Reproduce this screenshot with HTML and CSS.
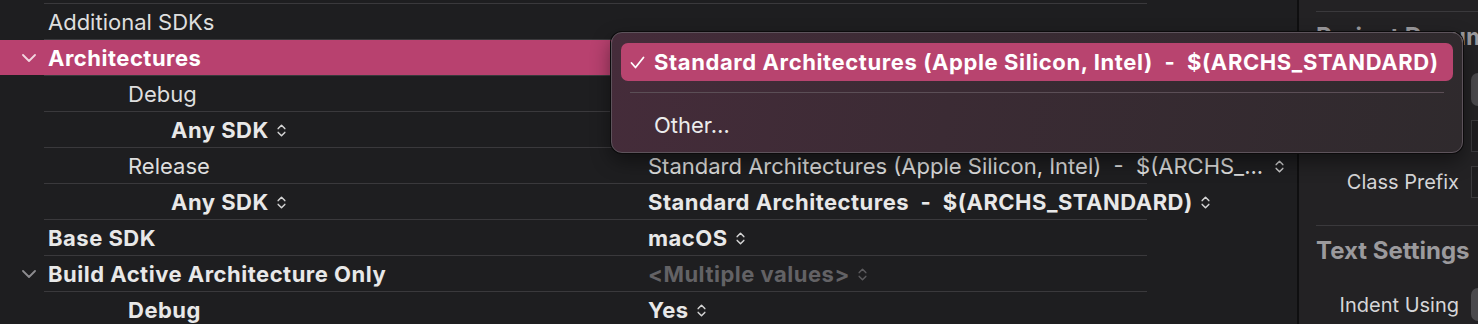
FILE: index.html
```html
<!DOCTYPE html>
<html>
<head>
<meta charset="utf-8">
<link rel="stylesheet" href="styles.css">
</head>
<body>
<div class="app">
  <div class="main">
    <div class="row"><div class="name l0">Additional SDKs</div><div class="value"></div></div>
    <div class="row selected"><div class="name l0 bold"><svg class="chev" width="14" height="8" viewBox="0 0 14 8"><path d="M1 1 L7 7 L13 1"/></svg>Architectures</div><div class="value"></div></div>
    <div class="row"><div class="name l1">Debug</div><div class="value"></div></div>
    <div class="row"><div class="name l2 bold">Any SDK<svg class="step" width="9" height="15" viewBox="0 0 9 15"><path d="M1.2 5.6 L4.5 2.2 L7.8 5.6 M1.2 9.4 L4.5 12.8 L7.8 9.4"/></svg></div><div class="value"></div></div>
    <div class="row"><div class="name l1">Release</div><div class="value">Standard Architectures (Apple Silicon, Intel)&nbsp; -&nbsp; $(ARCHS_...<svg class="step far" width="9" height="15" viewBox="0 0 9 15"><path d="M1.2 5.6 L4.5 2.2 L7.8 5.6 M1.2 9.4 L4.5 12.8 L7.8 9.4"/></svg></div></div>
    <div class="row"><div class="name l2 bold">Any SDK<svg class="step" width="9" height="15" viewBox="0 0 9 15"><path d="M1.2 5.6 L4.5 2.2 L7.8 5.6 M1.2 9.4 L4.5 12.8 L7.8 9.4"/></svg></div><div class="value bold">Standard Architectures&nbsp; -&nbsp; $(ARCHS_STANDARD)<svg class="step" width="9" height="15" viewBox="0 0 9 15"><path d="M1.2 5.6 L4.5 2.2 L7.8 5.6 M1.2 9.4 L4.5 12.8 L7.8 9.4"/></svg></div></div>
    <div class="row"><div class="name l0 bold">Base SDK</div><div class="value bold">macOS<svg class="step" width="9" height="15" viewBox="0 0 9 15"><path d="M1.2 5.6 L4.5 2.2 L7.8 5.6 M1.2 9.4 L4.5 12.8 L7.8 9.4"/></svg></div></div>
    <div class="row"><div class="name l0 bold"><svg class="chev dim" width="14" height="8" viewBox="0 0 14 8"><path d="M1 1 L7 7 L13 1"/></svg>Build Active Architecture Only</div><div class="value bold muted">&lt;Multiple values&gt;<svg class="step" width="9" height="15" viewBox="0 0 9 15"><path d="M1.2 5.6 L4.5 2.2 L7.8 5.6 M1.2 9.4 L4.5 12.8 L7.8 9.4"/></svg></div></div>
    <div class="row"><div class="name l1 bold">Debug</div><div class="value bold">Yes<svg class="step" width="9" height="15" viewBox="0 0 9 15"><path d="M1.2 5.6 L4.5 2.2 L7.8 5.6 M1.2 9.4 L4.5 12.8 L7.8 9.4"/></svg></div></div>
  </div>
  <div class="divider"></div>
  <div class="inspector">
    <div class="section">
      <div class="heading">Project Document</div>
      <div class="form">
        <div class="label">Project Format</div><div class="popup"></div>
        <div class="label">Organization</div><div class="field"></div>
        <div class="label">Class Prefix</div><div class="field"></div>
      </div>
    </div>
    <div class="section second">
      <div class="heading">Text Settings</div>
      <div class="form">
        <div class="label">Indent Using</div><div class="popup"></div>
      </div>
    </div>
  </div>
</div>
<div class="menu">
  <div class="item active"><svg class="check" width="15" height="13" viewBox="0 0 15 13"><path d="M1.5 7 L5.5 11.5 L13.5 1.5"/></svg>Standard Architectures (Apple Silicon, Intel)&nbsp; -&nbsp; $(ARCHS_STANDARD)</div>
  <div class="sep"></div>
  <div class="item">Other…</div>
</div>
</body>
</html>
```

FILE: styles.css
```css
html, body {
  margin: 0;
  padding: 0;
}
body {
  width: 1478px;
  height: 324px;
  overflow: hidden;
  background: #1e1e20;
  font-family: Inter, "Liberation Sans", sans-serif;
  font-size: 22px;
  color: #dedede;
  position: relative;
}
.app {
  display: flex;
  height: 324px;
}
.main {
  width: 1297px;
  padding-top: 3px;
  flex: none;
}
.row {
  height: 36px;
  box-sizing: border-box;
  padding-top: 2px;
  display: flex;
  align-items: center;
  background: linear-gradient(#3a393c, #3a393c) no-repeat 44px 0 / 1103px 1px;
  white-space: nowrap;
}
.row.selected {
  background: linear-gradient(#3a393c, #3a393c) no-repeat 44px 0 / 1103px 1px,
              linear-gradient(#b8416f, #b8416f) no-repeat 0 1px / 100% 35px;
  color: #ffffff;
}
.name {
  width: 648px;
  flex: none;
  display: flex;
  align-items: center;
  box-sizing: border-box;
}
.l0 { padding-left: 48px; }
.l1 { padding-left: 128px; }
.l2 { padding-left: 171px; }
.bold { font-weight: 700; letter-spacing: 0.5px; color: #e8e8e8; }
.selected .bold { color: #ffffff; }
.value {
  display: flex;
  align-items: center;
}
.muted { color: #636265; }
.chev {
  margin-left: -26px;
  margin-right: 12px;
  fill: none;
  stroke: #f2d6e0;
  stroke-width: 1.8;
  stroke-linecap: round;
  stroke-linejoin: round;
}
.chev.dim { stroke: #8d8c90; }
.step {
  margin-left: 8px;
  fill: none;
  stroke: currentColor;
  stroke-width: 1.5;
  stroke-linecap: round;
  stroke-linejoin: round;
  opacity: 0.9;
}
.step.far { margin-left: 12px; }
.divider {
  width: 2px;
  background: #0f0f10;
  flex: none;
}
.inspector {
  flex: 1;
  background: #232224;
  padding-left: 17px;
  padding-top: 11px;
  overflow: hidden;
}
.section {
  border-top: 1px solid #3a393c;
  padding-top: 12px;
  padding-bottom: 27px;
}
.heading {
  font-weight: 700;
  font-size: 24px;
  color: #9b9a9d;
  white-space: nowrap;
  height: 26px;
  line-height: 26px;
}
.form {
  display: grid;
  grid-template-columns: 143px 40px;
  column-gap: 12px;
  row-gap: 14px;
  margin-top: 23px;
  align-items: center;
}
.second .form { margin-top: 24px; }
.label {
  text-align: right;
  white-space: nowrap;
  color: #d6d6d8;
  font-size: 20px;
}
.popup {
  height: 33px;
  border-radius: 7px;
  background: #4a494c;
}
.field {
  height: 32px;
  box-sizing: border-box;
  border: 1px solid #3b3a3d;
  background: #1f1e20;
}
.menu {
  position: absolute;
  left: 611px;
  top: 32px;
  width: 852px;
  height: 121px;
  border: 1px solid #5d535b;
  border-radius: 11px;
  box-shadow: 0 0 0 1px #0c0b0c, 0 8px 20px rgba(0,0,0,0.45);
  background: linear-gradient(100deg, #452c3a 0%, #3b2b34 40%, #2f2a2d 100%);
  padding: 10px 9px 0;
  box-sizing: border-box;
  color: #ececec;
}
.item {
  height: 38px;
  border-radius: 7px;
  display: flex;
  align-items: center;
  padding-left: 33px;
  white-space: nowrap;
}
.item.active {
  background: #b8446f;
  color: #ffffff;
  font-weight: 700;
  letter-spacing: 0.6px;
  padding-left: 9px;
}
.check {
  margin-right: 9px;
  fill: none;
  stroke: #ffffff;
  stroke-width: 1.8;
  stroke-linecap: round;
  stroke-linejoin: round;
}
.sep {
  height: 1px;
  background: #5b4e56;
  margin: 11px 9px 12px;
}
.sep + .item { height: 40px; }
```
